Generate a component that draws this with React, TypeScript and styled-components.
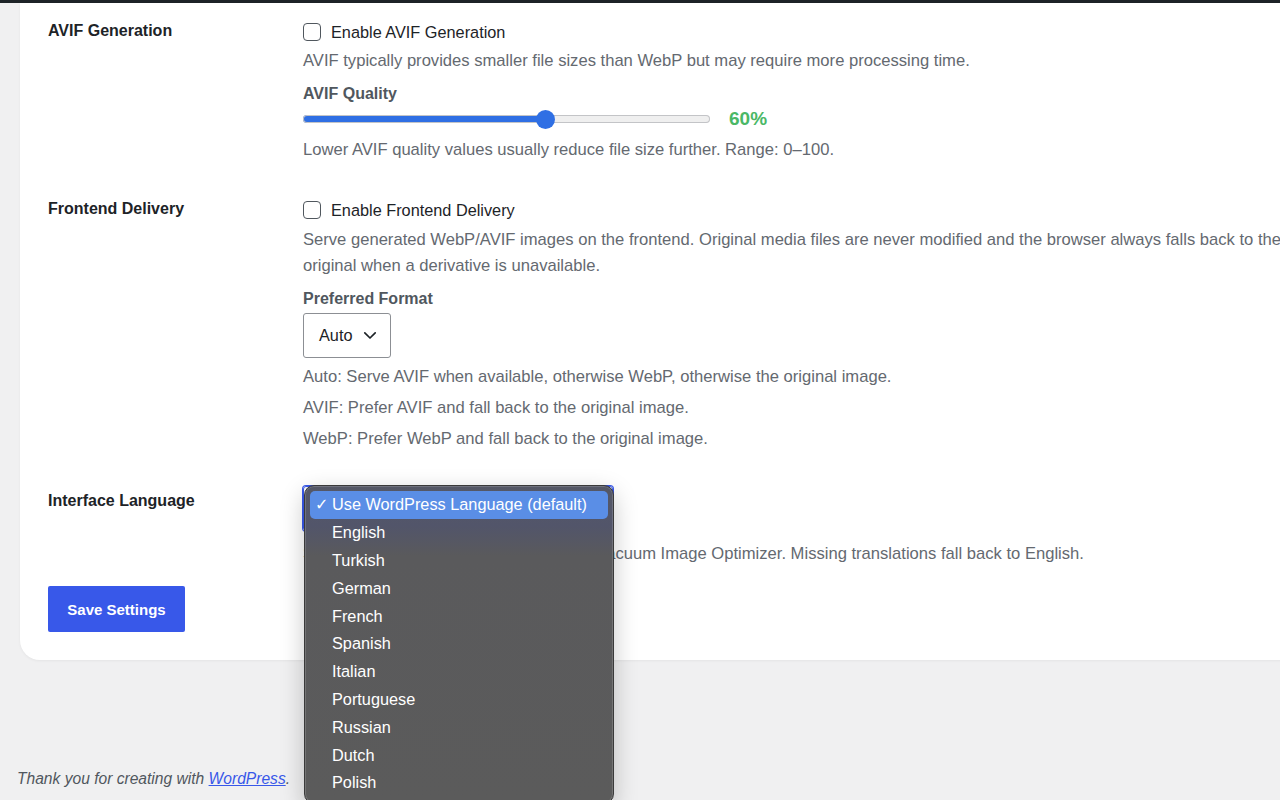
import React from "react";
import styled, { createGlobalStyle } from "styled-components";

const GlobalStyle = createGlobalStyle`
  html, body {
    margin: 0;
    padding: 0;
    background: #f0f0f1;
    overflow: hidden;
  }
  body {
    font-family: "Liberation Sans", Arial, sans-serif;
    color: #1d2327;
  }
  * {
    box-sizing: border-box;
  }
`;

const LANGUAGES = [
  "Use WordPress Language (default)",
  "English",
  "Turkish",
  "German",
  "French",
  "Spanish",
  "Italian",
  "Portuguese",
  "Russian",
  "Dutch",
  "Polish",
];

const Chevron = () => (
  <svg width="14" height="9" viewBox="0 0 14 9" fill="none">
    <path
      d="M1.8 1.8 7 7l5.2-5.2"
      stroke="#1d2327"
      strokeWidth="1.7"
      strokeLinecap="round"
      strokeLinejoin="round"
    />
  </svg>
);

const CheckField = ({ label }: { label: string }) => (
  <CheckLine>
    <CheckBox type="checkbox" />
    <span>{label}</span>
  </CheckLine>
);

const QualitySlider = ({ value }: { value: number }) => (
  <SliderRow>
    <Range
      type="range"
      min={0}
      max={100}
      defaultValue={value}
      style={{
        background: `linear-gradient(to right, #2f6fe4 0%, #2f6fe4 ${value}%, #efefef ${value}%, #efefef 100%)`,
      }}
    />
    <Percent>{value}%</Percent>
  </SliderRow>
);

const LanguageSelect = () => (
  <LangWrap>
    <LangClosed>Use WordPress Language (default)</LangClosed>
    <Menu>
      {LANGUAGES.map((lang, idx) => (
        <MenuItem key={lang} $active={idx === 0}>
          <Tick>{idx === 0 ? "✓" : ""}</Tick>
          {lang}
        </MenuItem>
      ))}
    </Menu>
  </LangWrap>
);

const App = () => {
  return (
    <>
      <GlobalStyle />
      <Page>
        <TopBar />
        <Wrap>
          <Card>
            <Row>
              <RowLabel>AVIF Generation</RowLabel>
              <Field>
                <CheckField label="Enable AVIF Generation" />
                <Help $gap={3}>
                  AVIF typically provides smaller file sizes than WebP but may
                  require more processing time.
                </Help>
                <SubHeading $gap={7}>AVIF Quality</SubHeading>
                <QualitySlider value={60} />
                <Help $gap={6}>
                  Lower AVIF quality values usually reduce file size further.
                  Range: 0–100.
                </Help>
              </Field>
            </Row>

            <Row>
              <RowLabel>Frontend Delivery</RowLabel>
              <Field>
                <CheckField label="Enable Frontend Delivery" />
                <Help $gap={4}>
                  Serve generated WebP/AVIF images on the frontend. Original
                  media files are never modified and the browser always falls
                  back to the original when a derivative is unavailable.
                </Help>
                <SubHeading $gap={7}>Preferred Format</SubHeading>
                <FormatSelect>
                  Auto
                  <Chevron />
                </FormatSelect>
                <Help $gap={6}>
                  Auto: Serve AVIF when available, otherwise WebP, otherwise the
                  original image.
                </Help>
                <Help $gap={5}>
                  AVIF: Prefer AVIF and fall back to the original image.
                </Help>
                <Help $gap={5}>
                  WebP: Prefer WebP and fall back to the original image.
                </Help>
              </Field>
            </Row>

            <Row>
              <RowLabel $tall>Interface Language</RowLabel>
              <Field>
                <LanguageSelect />
                <Help $gap={10}>
                  Select the admin interface language for Vacuum Image
                  Optimizer. Missing translations fall back to English.
                </Help>
              </Field>
            </Row>

            <SaveButton>Save Settings</SaveButton>
          </Card>
        </Wrap>
        <Footer>
          Thank you for creating with <FooterLink href="#">WordPress</FooterLink>.
        </Footer>
      </Page>
    </>
  );
};

const Page = styled.div`
  display: flex;
  flex-direction: column;
  min-height: 800px;
`;

const TopBar = styled.div`
  height: 3px;
  background: #1d2327;
`;

const Wrap = styled.div`
  padding-left: 20px;
`;

const Card = styled.div`
  width: 1320px;
  background: #fff;
  border-radius: 0 0 0 20px;
  box-shadow: 0 1px 3px rgba(0, 0, 0, 0.05);
  padding: 1px 0 28px 28px;
`;

const Row = styled.div`
  display: grid;
  grid-template-columns: 255px 1fr;
  padding: 15px 0 19px;
`;

const RowLabel = styled.div<{ $tall?: boolean }>`
  font-size: 16px;
  font-weight: 700;
  line-height: ${(p) => (p.$tall ? "30px" : "24px")};
  color: #1d2327;
`;

const Field = styled.div`
  display: flex;
  flex-direction: column;
  align-items: flex-start;
  width: 990px;
`;

const CheckLine = styled.label`
  display: flex;
  align-items: center;
  gap: 10px;
  height: 26px;
  font-size: 16.3px;
  color: #1d2327;
`;

const CheckBox = styled.input`
  appearance: none;
  width: 18px;
  height: 18px;
  margin: 0;
  border: 1.5px solid #50575e;
  border-radius: 4px;
  background: #fff;
`;

const Help = styled.p<{ $gap: number }>`
  margin: ${(p) => p.$gap}px 0 0;
  font-size: 16.6px;
  line-height: 26px;
  color: #646970;
`;

const SubHeading = styled.div<{ $gap: number }>`
  margin-top: ${(p) => p.$gap}px;
  font-size: 16px;
  font-weight: 700;
  line-height: 26px;
  color: #50575e;
`;

const SliderRow = styled.div`
  display: flex;
  align-items: center;
  gap: 19px;
  height: 24px;
`;

const Range = styled.input`
  appearance: none;
  width: 407px;
  height: 8px;
  margin: 0;
  border-radius: 4px;
  box-shadow: inset 0 0 0 1px #c3c4c7;
  outline: none;

  &::-webkit-slider-thumb {
    appearance: none;
    width: 19px;
    height: 19px;
    border-radius: 50%;
    background: #2f6fe4;
    border: none;
  }
`;

const Percent = styled.span`
  font-size: 19px;
  font-weight: 700;
  color: #4ab866;
`;

const FormatSelect = styled.div`
  margin-top: 1px;
  display: flex;
  align-items: center;
  justify-content: space-between;
  width: 88px;
  height: 45px;
  padding: 0 13px 0 15px;
  border: 1px solid #8c8f94;
  border-radius: 3px;
  font-size: 16.3px;
  color: #1d2327;
`;

const LangWrap = styled.div`
  position: relative;
`;

const LangClosed = styled.div`
  display: flex;
  align-items: center;
  width: 310px;
  height: 45px;
  padding: 0 15px;
  border: 1px solid #3858e9;
  border-radius: 3px;
  box-shadow: 0 0 0 1px #3858e9;
  font-size: 16px;
  color: #1d2327;
`;

const Menu = styled.div`
  position: absolute;
  left: 1px;
  top: -1px;
  width: 310px;
  padding: 5px 5px 6px;
  border-radius: 10px;
  background: linear-gradient(
    to bottom,
    #555866 0px,
    #52556a 40px,
    #5a5a5c 70px,
    #5b5b5b 100%
  );
  border: 1px solid #3a3a3a;
  box-shadow: inset 0 0 0 1px rgba(255, 255, 255, 0.16),
    0 8px 24px rgba(0, 0, 0, 0.22);
  z-index: 10;
`;

const MenuItem = styled.div<{ $active: boolean }>`
  display: flex;
  align-items: center;
  height: 27.8px;
  padding-left: 5px;
  border-radius: 5px;
  font-size: 16.3px;
  color: #fff;
  background: ${(p) => (p.$active ? "#5a8ee6" : "transparent")};
`;

const Tick = styled.span`
  width: 17px;
  font-family: "DejaVu Sans", sans-serif;
  font-size: 16px;
`;

const SaveButton = styled.button`
  display: block;
  width: 137px;
  height: 46px;
  margin: 0;
  border: none;
  border-radius: 2px;
  background: #3858e9;
  color: #fff;
  font-family: inherit;
  font-size: 15px;
  font-weight: 700;
`;

const Footer = styled.div`
  margin-top: auto;
  padding: 0 0 11px 17px;
  font-size: 15.6px;
  font-style: italic;
  line-height: 20px;
  color: #50575e;
`;

const FooterLink = styled.a`
  color: #3858e9;
`;

export default App;
